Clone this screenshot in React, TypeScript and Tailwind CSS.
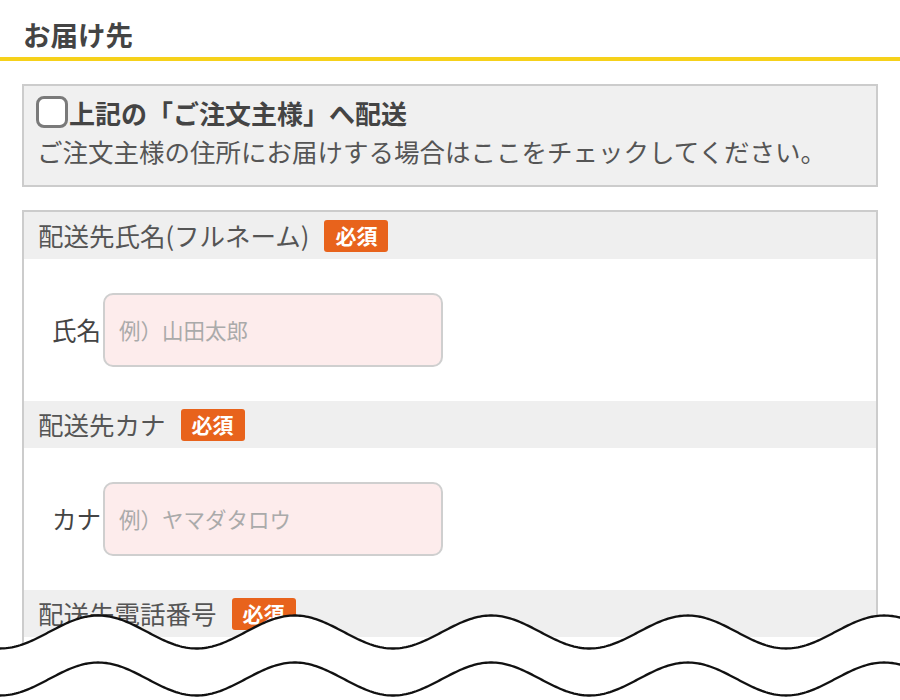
import React from "react";

const FONT = { fontFamily: '"Noto Sans CJK JP", "Noto Sans", sans-serif' };

function wavePath(c: number, A: number, P: number, x0: number, x1: number) {
  const pts: string[] = [];
  for (let x = x0; x <= x1; x += 2) {
    const y = c + A * Math.cos((2 * Math.PI * x) / P);
    pts.push(`${x === x0 ? "M" : "L"}${x.toFixed(1)},${y.toFixed(2)}`);
  }
  return pts.join(" ");
}

function Waves() {
  const P = 196.5;
  const A = 16.5;
  const top = wavePath(632 - 580, A, P, -4, 904);
  const bottom = wavePath(679 - 580, A, P, -4, 904);
  const fill = `${top} L904,130 L-4,130 Z`;
  return (
    <svg
      className="absolute left-0 top-[580px] pointer-events-none"
      width="900"
      height="120"
      viewBox="0 0 900 120"
    >
      <path d={fill} fill="#ffffff" />
      <path d={top} fill="none" stroke="#111" strokeWidth="2.3" />
      <path d={bottom} fill="none" stroke="#111" strokeWidth="2.3" />
    </svg>
  );
}

function Badge() {
  return (
    <span className="inline-flex items-center justify-center w-[64px] h-[32px] rounded-[3px] bg-[#e8631c] text-white text-[21px] font-bold leading-none ml-[15px]">
      必須
    </span>
  );
}

function SectionHeader({ title }: { title: string }) {
  return (
    <div className="h-[47px] bg-[#efefef] flex items-center pl-[14px] text-[25.5px] text-[#555]">
      <span>{title}</span>
      <Badge />
    </div>
  );
}

function InputRow({ label, placeholder }: { label: string; placeholder: string }) {
  return (
    <div className="h-[142px] bg-white flex items-center pl-[28px]">
      <span className="text-[24.5px] text-[#444] w-[51px]">{label}</span>
      <div className="w-[340px] h-[74px] rounded-[10px] border-2 border-[#cfcfcf] bg-[#fdecec] flex items-center pl-[14px] text-[21.5px] text-[#aaa]">
        {placeholder}
      </div>
    </div>
  );
}

export default function App() {
  return (
    <div className="relative w-[900px] h-[700px] overflow-hidden bg-white" style={FONT}>
      <div className="h-[57px] flex items-center pl-[23px] pt-[12px]">
        <h1 className="text-[27.5px] font-bold text-[#444]">お届け先</h1>
      </div>
      <div className="h-[4px] bg-[#f6d11a]" />

      <div className="px-[22px] pt-[23px]">
        <div className="border-2 border-[#cccccc] bg-[#f0f0f0] h-[103px] pl-[12px] pt-[8px]">
          <div className="flex items-center h-[36px]">
            <span className="w-[32px] h-[32px] rounded-[8px] border-[3px] border-[#7a7a7a] bg-white mr-[1px]" />
            <span className="text-[26px] font-bold text-[#444]">上記の「ご注文主様」へ配送</span>
          </div>
          <div className="text-[25.5px] text-[#555] leading-[42px] pl-[1px] whitespace-nowrap">
            ご注文主様の住所にお届けする場合はここをチェックしてください。
          </div>
        </div>

        <div className="mt-[23px] border-2 border-[#cccccc] h-[600px]">
          <SectionHeader title="配送先氏名(フルネーム)" />
          <InputRow label="氏名" placeholder="例）山田太郎" />
          <SectionHeader title="配送先カナ" />
          <InputRow label="カナ" placeholder="例）ヤマダタロウ" />
          <SectionHeader title="配送先電話番号" />
        </div>
      </div>

      <Waves />
    </div>
  );
}
